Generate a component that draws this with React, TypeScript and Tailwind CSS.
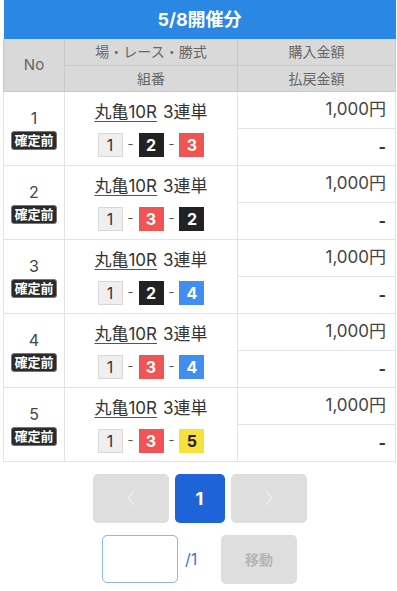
const font = { fontFamily: 'Inter, "Noto Sans CJK JP", sans-serif' };

type Bet = { no: number; picks: number[] };

const bets: Bet[] = [
  { no: 1, picks: [1, 2, 3] },
  { no: 2, picks: [1, 3, 2] },
  { no: 3, picks: [1, 2, 4] },
  { no: 4, picks: [1, 3, 4] },
  { no: 5, picks: [1, 3, 5] },
];

const boatStyles: Record<number, string> = {
  1: "bg-[#efefef] text-[#333] border border-[#d8d8d8] font-normal",
  2: "bg-[#222] text-white font-bold",
  3: "bg-[#f05454] text-white font-bold",
  4: "bg-[#3f8ef0] text-white font-bold",
  5: "bg-[#f8e13c] text-[#222] font-bold",
};

function Boat({ n }: { n: number }) {
  return (
    <span
      className={`flex h-[24px] w-[25px] items-center justify-center text-[16px] leading-none ${boatStyles[n]}`}
    >
      {n}
    </span>
  );
}

function Row({ bet }: { bet: Bet }) {
  return (
    <tr>
      <td rowSpan={2} className="border border-[#e4e4e4] align-top">
        <div className="flex flex-col items-center pt-[16px]">
          <span className="text-[16px] leading-[20px] text-[#444]">{bet.no}</span>
          <span className="mt-[3px] rounded-[3px] border border-[#777] bg-[#2b2b2b] px-[2px] text-[13px] font-bold leading-[17px] text-white">
            確定前
          </span>
        </div>
      </td>
      <td rowSpan={2} className="border border-[#e4e4e4] align-top">
        <div className="flex flex-col items-center pt-[9px]">
          <div className="text-[17px] leading-[22px] text-[#333]">
            <span className="underline underline-offset-[3px] decoration-[#555]">丸亀10R</span>
            <span className="ml-[6px]">3連単</span>
          </div>
          <div className="mt-[10px] flex items-center gap-[5px] text-[#555]">
            <Boat n={bet.picks[0]} />
            <span className="text-[13px]">-</span>
            <Boat n={bet.picks[1]} />
            <span className="text-[13px]">-</span>
            <Boat n={bet.picks[2]} />
          </div>
        </div>
      </td>
      <td className="h-[37px] border border-[#e4e4e4] pr-[9px] text-right text-[17px] text-[#444]">
        1,000円
      </td>
    </tr>
  );
}

export default function App() {
  return (
    <div className="min-h-[591px] w-[397px] bg-white" style={font}>
      <div className="pl-[3px] pr-[2px]">
        <table className="w-[392px] table-fixed border-collapse">
          <colgroup>
            <col className="w-[61px]" />
            <col className="w-[173px]" />
            <col className="w-[158px]" />
          </colgroup>
          <thead>
            <tr>
              <th
                colSpan={3}
                className="h-[39px] bg-[#2a87e4] text-[18px] font-bold text-white"
              >
                5/8開催分
              </th>
            </tr>
            <tr className="bg-[#d9d9d9] text-[14px] text-[#666]">
              <th rowSpan={2} className="border border-[#c9c9c9] border-t-0 text-[15px] font-normal">
                No
              </th>
              <th className="h-[26px] border border-[#c9c9c9] border-t-0 font-normal">
                場・レース・勝式
              </th>
              <th className="h-[26px] border border-[#c9c9c9] border-t-0 font-normal">購入金額</th>
            </tr>
            <tr className="bg-[#d9d9d9] text-[14px] text-[#666]">
              <th className="h-[26px] border border-[#c9c9c9] font-normal">組番</th>
              <th className="h-[26px] border border-[#c9c9c9] font-normal">払戻金額</th>
            </tr>
          </thead>
          <tbody>
            {bets.map((bet) => [
              <Row key={`a${bet.no}`} bet={bet} />,
              <tr key={`b${bet.no}`}>
                <td className="h-[37px] border border-[#e4e4e4] pr-[9px] text-right text-[16px] font-bold text-[#333]">
                  -
                </td>
              </tr>,
            ])}
          </tbody>
        </table>
      </div>

      <div className="mt-[12px] flex justify-center gap-[6px] pl-[2px]">
        <button className="flex h-[49px] w-[76px] items-center justify-center rounded-[5px] bg-[#dedede] text-white">
          <svg width="10" height="16" viewBox="0 0 10 16" fill="none">
            <path d="M8 1L2 8l6 7" stroke="#ececec" strokeWidth="1.6" />
          </svg>
        </button>
        <button className="flex h-[49px] w-[50px] items-center justify-center rounded-[5px] bg-[#1f63d8] text-[18px] font-bold text-white">
          1
        </button>
        <button className="flex h-[49px] w-[76px] items-center justify-center rounded-[5px] bg-[#dedede]">
          <svg width="10" height="16" viewBox="0 0 10 16" fill="none">
            <path d="M2 1l6 7-6 7" stroke="#ececec" strokeWidth="1.6" />
          </svg>
        </button>
      </div>

      <div className="mt-[12px] flex items-center justify-center pl-[2px]">
        <input
          className="h-[48px] w-[76px] rounded-[5px] border border-[#8ab6f5] bg-white outline-none"
          aria-label="page"
        />
        <span className="ml-[7px] w-[36px] text-[16px] text-[#3a74d8]">/1</span>
        <button className="h-[49px] w-[76px] rounded-[5px] bg-[#dedede] text-[14px] font-bold text-[#b5b5b5]">
          移動
        </button>
      </div>
    </div>
  );
}
